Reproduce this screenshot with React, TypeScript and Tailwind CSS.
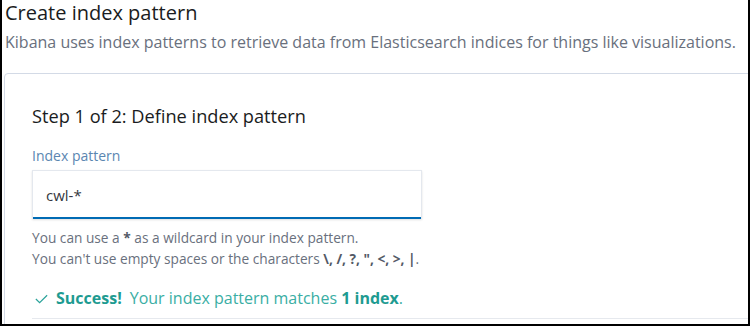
import React from "react";

export default function App() {
  return (
    <div
      className="w-[750px] h-[326px] overflow-hidden bg-white border-l-2 border-r-2 border-b-2 border-black relative"
      style={{ fontFamily: '"Open Sans", sans-serif' }}
    >
      <div className="pl-[2px]">
        <h1 className="text-[20px] leading-[26px] text-[#1a1c21] pl-[1px]">Create index pattern</h1>
        <p className="mt-[5px] text-[16px] leading-[22px] text-[#69707d] pl-[1px] whitespace-nowrap">
          Kibana uses index patterns to retrieve data from Elasticsearch indices for things like visualizations.
        </p>
        <div className="mt-[20px] w-[800px] h-[300px] rounded-[4px] border border-[#d3dae6] pl-[27px] pt-[30px]">
          <h2 className="text-[18.2px] leading-[24px] text-[#1a1c21]">Step 1 of 2: Define index pattern</h2>
          <label className="block mt-[18px] text-[14px] leading-[20px] text-[#5b86b1]">Index pattern</label>
          <div className="mt-[4px] w-[390px] h-[49px] bg-white border border-[#e4e8ee] border-b-0 shadow-[0_1px_2px_rgba(0,0,0,0.12)] flex items-center pl-[13px] relative">
            <span className="text-[15px] text-[#343741]">cwl-*</span>
            <div className="absolute left-0 right-0 bottom-0 h-[2px] bg-[#006bb4]"></div>
          </div>
          <div className="mt-[8px] text-[13.7px] leading-[21px] text-[#69707d]">
            <div>
              You can use a <b className="font-bold text-[#535966]">*</b> as a wildcard in your index pattern.
            </div>
            <div>
              You can't use empty spaces or the characters{" "}
              <b className="font-bold text-[#535966]">\, /, ?, ", &lt;, &gt;, |</b>.
            </div>
          </div>
          <div className="mt-[17px] flex items-center text-[16px] leading-[24px] text-[#3aaea4] pl-[2px]">
            <svg width="15" height="15" viewBox="0 0 16 16" className="mr-[7px]">
              <path d="M2 8.5 L6 12.5 L14 4.5" fill="none" stroke="#2aa39a" strokeWidth="1.3" />
            </svg>
            <span className="font-bold text-[#1e9b91]">Success!</span>
            <span className="ml-[8px]">
              Your index pattern matches <b className="font-bold text-[#1e9b91]">1 index</b>.
            </span>
          </div>
          <div className="mt-[8px] h-[1px] bg-[#e6e9ee]"></div>
        </div>
      </div>
    </div>
  );
}
